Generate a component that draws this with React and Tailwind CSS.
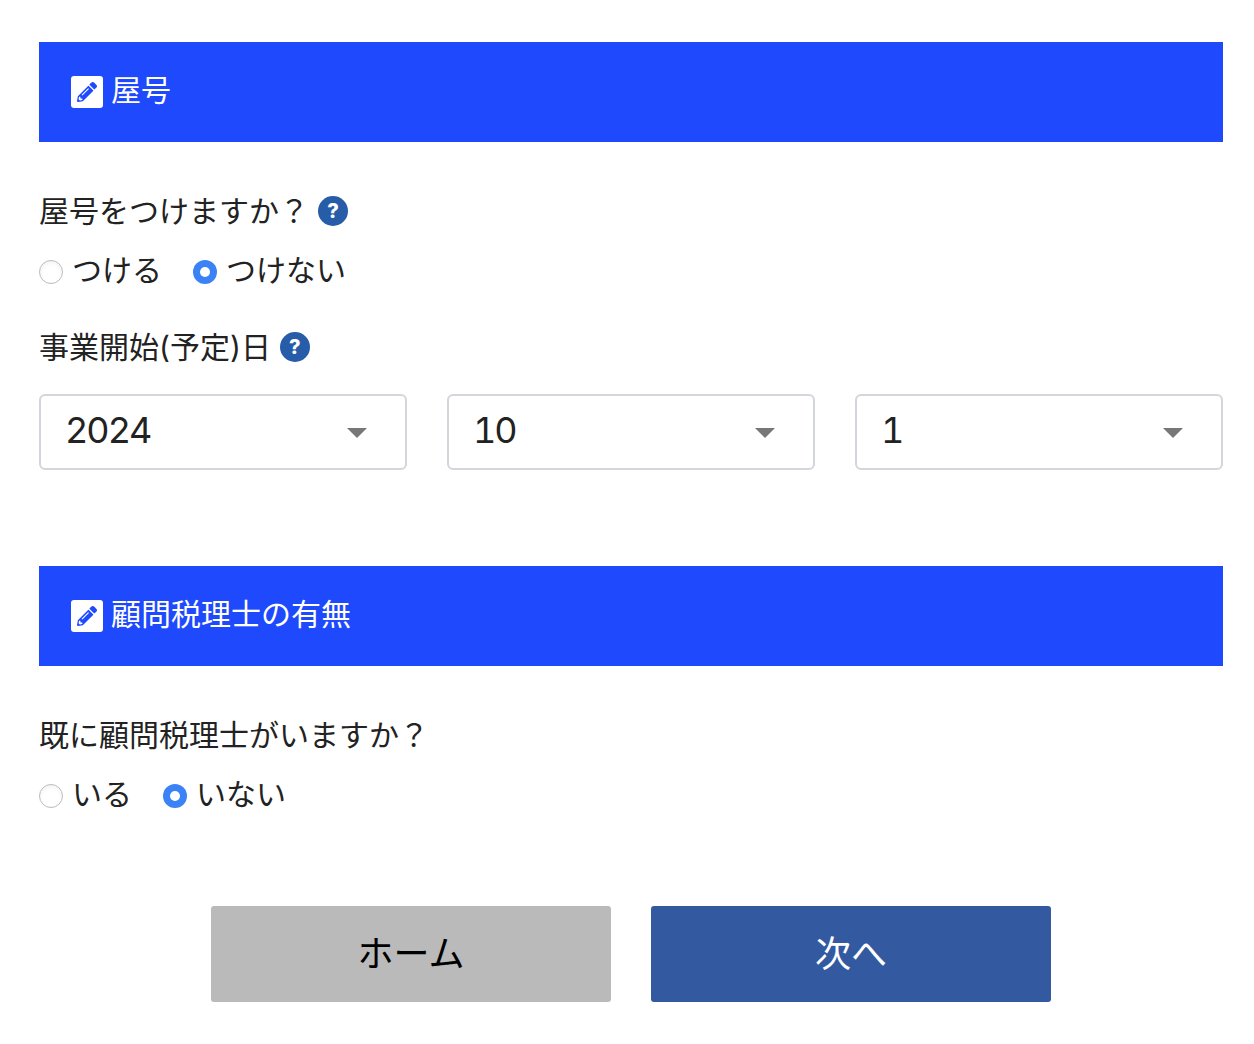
import React, { useState } from 'react';
import { FaPencilAlt } from 'react-icons/fa';

const font = "font-['Inter','Noto_Sans_CJK_JP',sans-serif]";

const SectionHeader = ({ title }) => (
  <div className="flex h-[100px] items-center bg-[#1e49fd] pl-8 text-white">
    <span className="flex h-8 w-8 items-center justify-center rounded-[3px] bg-white">
      <FaPencilAlt className="h-5 w-5 text-[#1e49fd]" />
    </span>
    <h2 className="ml-2 pb-1 text-[30px] leading-10 font-normal">{title}</h2>
  </div>
);

const Label = ({ children, help }) => (
  <div className="flex h-10 items-center text-[30px] leading-10 font-normal text-[#222]">
    <span>{children}</span>
    {help && (
      <span className="ml-[9px] flex h-[30px] w-[30px] items-center justify-center rounded-full bg-[#265ca8] text-[20px] leading-none font-extrabold text-white">
        ?
      </span>
    )}
  </div>
);

const Radio = ({ label, checked, onClick }) => (
  <button type="button" onClick={onClick} className="flex h-10 items-center text-[30px] leading-10 font-normal text-[#222]">
    {checked ? (
      <span className="mt-0.5 flex h-6 w-6 items-center justify-center rounded-full bg-[#3b82f6]">
        <span className="h-2.5 w-2.5 rounded-full bg-white" />
      </span>
    ) : (
      <span className="mt-0.5 h-6 w-6 rounded-full border border-[#bbb] bg-white shadow-inner" />
    )}
    <span className="ml-[9px] pb-0.5">{label}</span>
  </button>
);

const DateSelect = ({ value, options }) => (
  <div className="relative flex-1">
    <select
      defaultValue={value}
      className="h-[76px] w-full appearance-none rounded-md border-2 border-[#d3d6da] bg-white pb-1 pl-[24px] text-[36px] font-normal tabular-nums tracking-[-2px] text-[#222] outline-none"
    >
      {options.map((o) => (
        <option key={o} value={o}>{o}</option>
      ))}
    </select>
    <span className="pointer-events-none absolute top-[34px] right-[40px] h-0 w-0 border-x-[10px] border-t-[10px] border-x-transparent border-t-[#777]" />
  </div>
);

const App = () => {
  const [hasName, setHasName] = useState(false);
  const [hasAccountant, setHasAccountant] = useState(false);

  return (
    <div className={`${font} min-h-[1044px] bg-white pt-[42px] pr-[31px] pl-[39px]`}>
      <SectionHeader title="屋号" />

      <div className="mt-[49px]">
        <Label help>屋号をつけますか？</Label>
      </div>
      <div className="mt-5 flex gap-[31px]">
        <Radio label="つける" checked={hasName} onClick={() => setHasName(true)} />
        <Radio label="つけない" checked={!hasName} onClick={() => setHasName(false)} />
      </div>

      <div className="mt-9">
        <Label help>事業開始(予定)日</Label>
      </div>
      <div className="mt-[27px] flex gap-10">
        <DateSelect value="2024" options={['2023', '2024', '2025']} />
        <DateSelect value="10" options={['9', '10', '11']} />
        <DateSelect value="1" options={['1', '2', '3']} />
      </div>

      <div className="mt-24">
        <SectionHeader title="顧問税理士の有無" />
      </div>

      <div className="mt-[49px]">
        <Label>既に顧問税理士がいますか？</Label>
      </div>
      <div className="mt-5 flex gap-[31px]">
        <Radio label="いる" checked={hasAccountant} onClick={() => setHasAccountant(true)} />
        <Radio label="いない" checked={!hasAccountant} onClick={() => setHasAccountant(false)} />
      </div>

      <div className="mt-[91px] flex justify-center gap-10">
        <button type="button" className="h-24 w-[400px] rounded-[3px] bg-[#bababa] text-[36px] font-normal text-black">
          ホーム
        </button>
        <button type="button" className="h-24 w-[400px] rounded-[3px] bg-[#335aa0] text-[36px] font-normal text-white">
          次へ
        </button>
      </div>
    </div>
  );
};

export default App;
